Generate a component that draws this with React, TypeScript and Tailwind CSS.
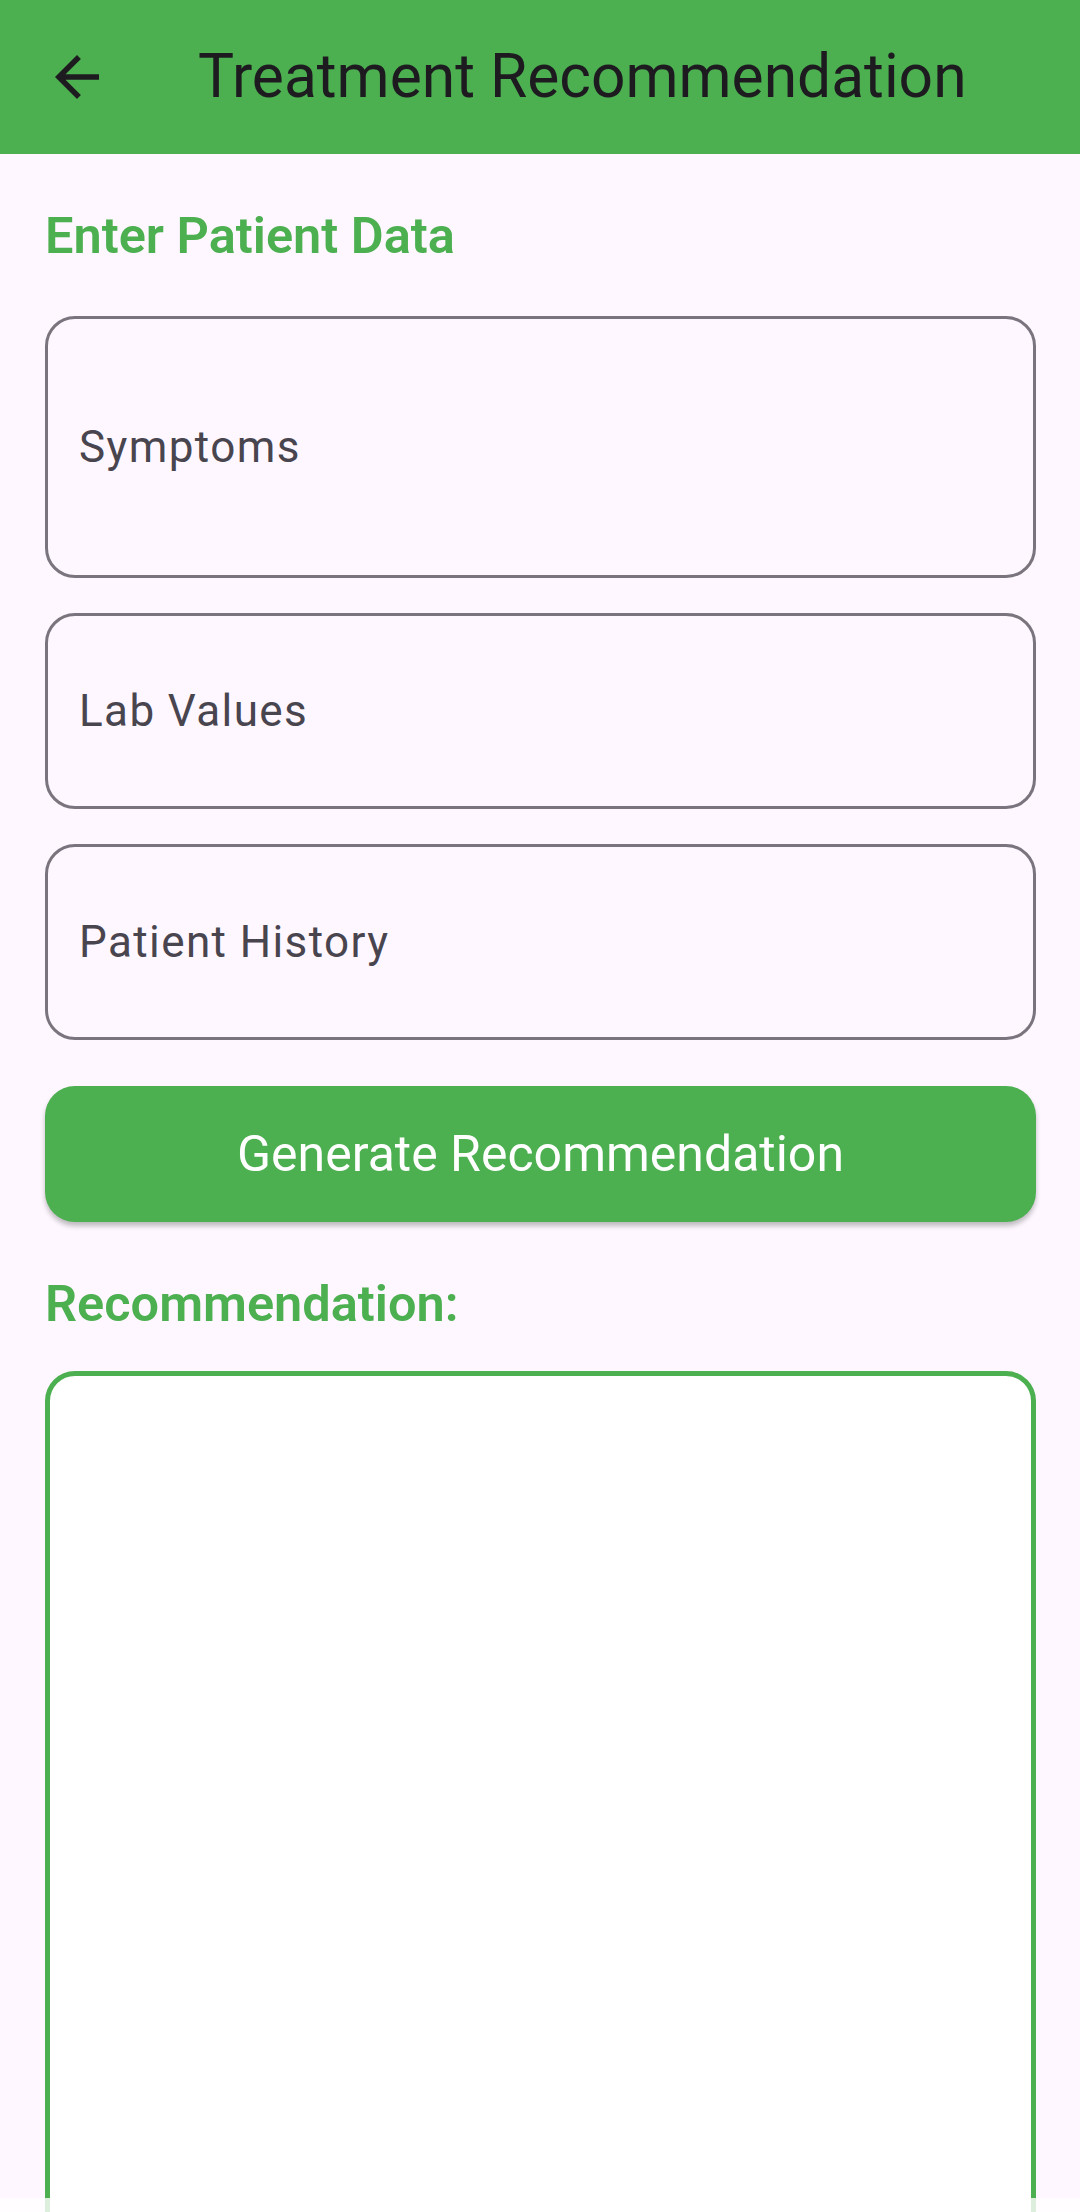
const fields = [
  { label: 'Symptoms', h: 'h-[262px]' },
  { label: 'Lab Values', h: 'h-[196px]' },
  { label: 'Patient History', h: 'h-[196px]' },
]

function BackArrow() {
  return (
    <svg viewBox="0 0 24 24" className="h-[66px] w-[66px] fill-[#1D1B20]">
      <path d="M20 11H7.83l5.59-5.59L12 4l-8 8 8 8 1.41-1.41L7.83 13H20v-2z" />
    </svg>
  )
}

export default function App() {
  return (
    <div className="relative flex h-[2212px] w-[1080px] flex-col overflow-hidden bg-[#FEF7FF] font-['Roboto',sans-serif]">
      <header className="flex h-[154px] shrink-0 items-center bg-[#4CAF50]">
        <div className="flex w-[154px] justify-center">
          <BackArrow />
        </div>
        <h1 className="pl-[44px] text-[60.5px] leading-[72px] text-[#1D1B20]">Treatment Recommendation</h1>
      </header>

      <main className="flex flex-1 flex-col pl-[45px] pr-[44px]">
        <h2 className="mt-[50px] text-[50.5px] font-semibold leading-[64px] text-[#4CAF50]">Enter Patient Data</h2>

        <div className="mt-[48px] flex flex-col gap-[35px]">
          {fields.map((f) => (
            <div
              key={f.label}
              className={`flex ${f.h} items-center rounded-[30px] border-[3px] border-[#79747E] px-[31px]`}
            >
              <span className="text-[44px] tracking-[1.4px] text-[#49454F]">{f.label}</span>
            </div>
          ))}
        </div>

        <button className="mt-[46px] flex h-[136px] items-center justify-center rounded-[30px] bg-[#4CAF50] text-[50px] text-white shadow-[0_4px_5px_rgba(0,0,0,0.25)]">
          Generate Recommendation
        </button>

        <h2 className="mt-[50px] text-[50.5px] font-semibold leading-[64px] text-[#4CAF50]">Recommendation:</h2>

        <div className="mt-[35px] h-[1000px] shrink-0 rounded-[30px] border-[5.5px] border-[#4CAF50] bg-white" />
      </main>

      <div className="absolute bottom-0 left-0 h-[14px] w-full bg-white/80" />
    </div>
  )
}
